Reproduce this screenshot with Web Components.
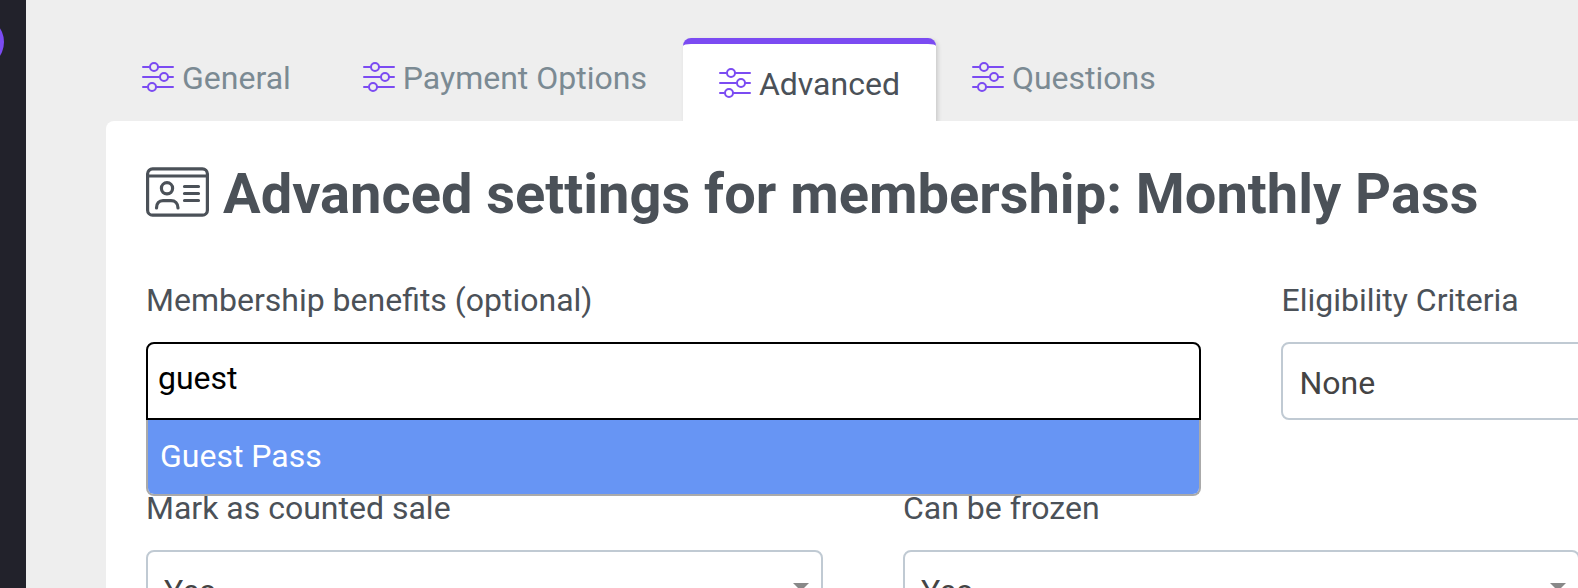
<!DOCTYPE html>
<html lang="en">
<head>
  <meta charset="utf-8">
  <meta name="viewport" content="width=device-width, initial-scale=1">
  <title>Advanced settings</title>
  <style>
    body {
      --purple: #7b4bf2;
      --text: #4b5158;
      --muted: #7b8a93;
      --border: #c0cad3;
      margin: 0;
      background: #eeeeee;
      color: var(--text);
      font-family: Roboto, "Liberation Sans", sans-serif;
      font-size: 32px;
      overflow: hidden;
    }
  </style>
</head>
<body>
  <membership-app></membership-app>

  <script>
    class AppSidebar extends HTMLElement {
      connectedCallback() {
        this.attachShadow({ mode: 'open' });
        this.shadowRoot.innerHTML = `
          <style>
            :host {
              display: block;
              flex: 0 0 26px;
              background: #22222b;
              overflow: hidden;
            }
            /* avatar slides under the collapsed edge */
            .avatar {
              width: 52px;
              height: 52px;
              margin-top: 16px;
              margin-left: -48px;
              border-radius: 50%;
              background: var(--purple);
            }
          </style>
          <div class="avatar"></div>
        `;
      }
    }
    customElements.define('app-sidebar', AppSidebar);

    class SlidersIcon extends HTMLElement {
      connectedCallback() {
        this.attachShadow({ mode: 'open' });
        this.shadowRoot.innerHTML = `
          <style>
            :host { display: block; flex: none; }
            svg {
              display: block;
              fill: none;
              stroke: var(--purple);
              stroke-width: 2;
              stroke-linecap: round;
            }
          </style>
          <svg width="32" height="33" viewBox="0 0 32 33" aria-hidden="true">
            <path d="M1 5h6M16 5h15M1 15h16M26 15h5M1 25h4M14 25h17"/>
            <circle cx="12" cy="5" r="4"/>
            <circle cx="22" cy="15" r="4"/>
            <circle cx="10" cy="25" r="4"/>
          </svg>
        `;
      }
    }
    customElements.define('sliders-icon', SlidersIcon);

    class SettingsTab extends HTMLElement {
      connectedCallback() {
        const active = this.hasAttribute('active');
        this.attachShadow({ mode: 'open' });
        this.shadowRoot.innerHTML = `
          <style>
            :host { display: block; }
            button {
              display: flex;
              align-items: center;
              gap: 8px;
              margin: 0;
              padding: 22px 36px 18px;
              border: 0;
              background: none;
              color: var(--muted);
              font: inherit;
              line-height: 37px;
              white-space: nowrap;
              cursor: pointer;
            }
            :host([active]) button {
              border-top: 6px solid var(--purple);
              border-radius: 8px 8px 0 0;
              background: white;
              color: var(--text);
              box-shadow: 2px 2px 4px rgba(0, 0, 0, 0.15);
            }
          </style>
          <button type="button" role="tab" aria-selected="${active}">
            <sliders-icon></sliders-icon>
            <slot></slot>
          </button>
        `;
      }
    }
    customElements.define('settings-tab', SettingsTab);

    class SettingsTabs extends HTMLElement {
      connectedCallback() {
        this.attachShadow({ mode: 'open' });
        this.shadowRoot.innerHTML = `
          <style>
            :host {
              display: flex;
              align-items: flex-start;
            }
          </style>
          <slot></slot>
        `;
        this.setAttribute('role', 'tablist');
      }
    }
    customElements.define('settings-tabs', SettingsTabs);

    class PanelHeading extends HTMLElement {
      connectedCallback() {
        this.attachShadow({ mode: 'open' });
        this.shadowRoot.innerHTML = `
          <style>
            :host { display: block; }
            h1 {
              display: flex;
              align-items: center;
              gap: 13px;
              margin: 0;
              font-size: 56px;
              line-height: 66px;
              font-weight: 700;
              white-space: nowrap;
            }
            svg {
              flex: none;
              fill: none;
              stroke: currentColor;
              stroke-width: 3.2;
              stroke-linecap: round;
            }
          </style>
          <h1>
            <svg width="64" height="54" viewBox="0 0 64 54" aria-hidden="true">
              <rect x="1.6" y="1.8" width="59.8" height="46.4" rx="5"/>
              <path d="M2 9h59"/>
              <circle cx="21" cy="21.3" r="5.6"/>
              <path d="M10.5 41c0-4.5 2.500-7.3 6.500-7.3h8c4 0 7 2.8 7 7.3"/>
              <path d="M38.5 19.5h14M38.5 26.5h14M38.5 33.5h14"/>
            </svg>
            <slot></slot>
          </h1>
        `;
      }
    }
    customElements.define('panel-heading', PanelHeading);

    class BenefitPicker extends HTMLElement {
      connectedCallback() {
        this.attachShadow({ mode: 'open' });
        this.shadowRoot.innerHTML = `
          <style>
            :host { display: block; }
            label {
              display: block;
              margin-bottom: 22px;
              line-height: 40px;
            }
            .combo { position: relative; }
            input {
              display: block;
              box-sizing: border-box;
              width: 100%;
              height: 78px;
              margin: 0;
              padding: 0 10px 6px;
              border: 2px solid black;
              border-radius: 8px 8px 0 0;
              outline: none;
              background: white;
              color: black;
              font: inherit;
            }
            ul {
              position: absolute;
              top: 100%;
              left: 0;
              right: 0;
              z-index: 1;
              margin: 0;
              padding: 0;
              border: 2px solid #aaaaaa;
              border-top: 0;
              border-radius: 0 0 8px 8px;
              background: white;
              list-style: none;
              overflow: hidden;
            }
            li {
              padding: 17px 12px 19px;
              background: #6795f4;
              color: white;
              line-height: 38px;
            }
          </style>
          <label for="search">${this.getAttribute('label')}</label>
          <div class="combo">
            <input id="search" type="text" role="combobox" autocomplete="off"
              aria-expanded="true" aria-controls="results" value="${this.getAttribute('value')}">
            <ul id="results" role="listbox">
              <li role="option" aria-selected="true"><slot></slot></li>
            </ul>
          </div>
        `;
      }
    }
    customElements.define('benefit-picker', BenefitPicker);

    class SelectField extends HTMLElement {
      connectedCallback() {
        const options = this.getAttribute('options').split(',');
        this.attachShadow({ mode: 'open' });
        this.shadowRoot.innerHTML = `
          <style>
            :host { display: block; }
            label {
              display: block;
              margin-bottom: 22px;
              line-height: 40px;
            }
            .box { position: relative; }
            .box::after {
              content: "";
              position: absolute;
              top: 33px;
              right: 14px;
              border: 8px solid transparent;
              border-top-color: #888888;
              border-bottom: 0;
              pointer-events: none;
            }
            select {
              display: block;
              box-sizing: border-box;
              width: 100%;
              height: 78px;
              margin: 0;
              padding: 4px 48px 0 16px;
              border: 2px solid var(--border);
              border-radius: 8px;
              background: white;
              color: #444444;
              font: inherit;
              appearance: none;
            }
          </style>
          <label for="field">${this.getAttribute('label')}</label>
          <div class="box">
            <select id="field">
              ${options.map(o => `<option>${o}</option>`).join('')}
            </select>
          </div>
        `;
      }
    }
    customElements.define('select-field', SelectField);

    class MembershipApp extends HTMLElement {
      connectedCallback() {
        this.attachShadow({ mode: 'open' });
        this.shadowRoot.innerHTML = `
          <style>
            :host {
              display: flex;
              height: 100vh;
              overflow: hidden;
            }
            main {
              flex: 1;
              min-width: 0;
              display: flex;
              flex-direction: column;
              padding: 38px 0 0 80px;
            }
            .panel {
              position: relative;
              flex: 1 0 auto;
              padding: 40px 0 40px 40px;
              border-radius: 8px 0 0 0;
              background: white;
            }
            /* wide twelve column form that runs past the right edge */
            .fields {
              display: grid;
              grid-template-columns: repeat(12, minmax(0, 1fr));
              gap: 68px 80px;
              width: 153%;
              margin-top: 53px;
            }
            .half { grid-column: span 6; }
            .third { grid-column: span 4; }
          </style>
          <app-sidebar></app-sidebar>
          <main>
            <settings-tabs>
              <settings-tab>General</settings-tab>
              <settings-tab>Payment Options</settings-tab>
              <settings-tab active>Advanced</settings-tab>
              <settings-tab>Questions</settings-tab>
            </settings-tabs>
            <section class="panel">
              <panel-heading>Advanced settings for membership: Monthly Pass</panel-heading>
              <div class="fields">
                <benefit-picker class="half" label="Membership benefits (optional)" value="guest">Guest Pass</benefit-picker>
                <select-field class="half" label="Eligibility Criteria" options="None"></select-field>
                <select-field class="third" label="Mark as counted sale" options="Yes,No"></select-field>
                <select-field class="third" label="Can be frozen" options="Yes,No"></select-field>
              </div>
            </section>
          </main>
        `;
      }
    }
    customElements.define('membership-app', MembershipApp);
  </script>
</body>
</html>
